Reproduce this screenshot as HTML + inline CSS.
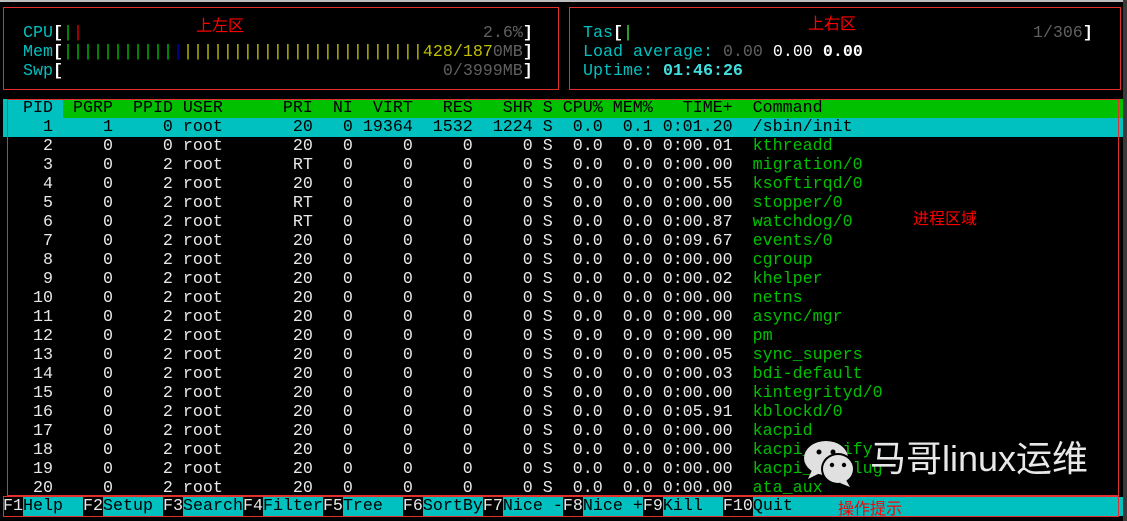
<!DOCTYPE html>
<html><head><meta charset="utf-8"><style>
html,body{margin:0;padding:0;background:#000;width:1127px;height:521px;overflow:hidden;position:relative}
pre{margin:0;font-family:"Liberation Mono",monospace;font-size:16.67px;line-height:19px;position:absolute;white-space:pre;color:#e8e8e8;overflow:hidden}
.c{color:#00c0c0}.g{color:#00c000}.r{color:#e00000}.b{color:#0000d0}.y{color:#c0c000}.d{color:#606060}.w{color:#fff;font-weight:bold}.bc{color:#40e0e0;font-weight:bold}
.box{position:absolute;border:1px solid #e03030;box-sizing:border-box}
.ann{position:absolute;color:#ff0000;font-family:"Noto Sans CJK SC",sans-serif;font-size:16px;line-height:16px}
.hd{background:#00c000;color:#000}.hp{background:#00c0c0;color:#000}
.sel{background:#00c0c0;color:#000}
.k{color:#e8e8e8;background:#000}.f{background:#00c0c0;color:#000}
</style></head><body>
<div style="position:absolute;left:0;top:0;width:1127px;height:2px;background:#bdbdbd"></div>
<div style="position:absolute;left:1123px;top:0;width:4px;height:521px;background:#3a3a3a"></div>
<div class="box" style="left:3px;top:7px;width:556px;height:83px"></div>
<div class="box" style="left:569px;top:7px;width:552px;height:83px"></div>
<pre style="left:3px;top:24px">  <span class="c">CPU</span><span class="w">[</span><span class="g">|</span><span class="r">|</span>                                        <span class="d">2.6%</span><span class="w">]</span>
  <span class="c">Mem</span><span class="w">[</span><span class="g">|||||||||||</span><span class="b">|</span><span class="y">||||||||||||||||||||||||428/187</span><span class="d">0MB</span><span class="w">]</span>
  <span class="c">Swp</span><span class="w">[</span>                                      <span class="d">0/3999MB</span><span class="w">]</span></pre>
<pre style="left:583px;top:24px"><span class="c">Tas</span><span class="w">[</span><span style="color:#40e040">|</span>                                        <span class="d">1/306</span><span class="w">]</span>
<span class="c">Load average: </span><span class="d">0.00</span> <span style="color:#fff">0.00</span> <span class="w">0.00</span>
<span class="c">Uptime: </span><span class="bc">01:46:26</span></pre>
<pre style="left:3px;top:99px;width:1120px;height:397px"><span class="hp">  PID </span><span class="hd"> PGRP  PPID USER      PRI  NI  VIRT   RES   SHR S CPU% MEM%   TIME+  Command                                       </span>
<span class="sel">    1     1     0 root       20   0 19364  1532  1224 S  0.0  0.1 0:01.20  /sbin/init                                    </span>
    2     0     0 root       20   0     0     0     0 S  0.0  0.0 0:00.01  <span class="g">kthreadd</span>
    3     0     2 root       RT   0     0     0     0 S  0.0  0.0 0:00.00  <span class="g">migration/0</span>
    4     0     2 root       20   0     0     0     0 S  0.0  0.0 0:00.55  <span class="g">ksoftirqd/0</span>
    5     0     2 root       RT   0     0     0     0 S  0.0  0.0 0:00.00  <span class="g">stopper/0</span>
    6     0     2 root       RT   0     0     0     0 S  0.0  0.0 0:00.87  <span class="g">watchdog/0</span>
    7     0     2 root       20   0     0     0     0 S  0.0  0.0 0:09.67  <span class="g">events/0</span>
    8     0     2 root       20   0     0     0     0 S  0.0  0.0 0:00.00  <span class="g">cgroup</span>
    9     0     2 root       20   0     0     0     0 S  0.0  0.0 0:00.02  <span class="g">khelper</span>
   10     0     2 root       20   0     0     0     0 S  0.0  0.0 0:00.00  <span class="g">netns</span>
   11     0     2 root       20   0     0     0     0 S  0.0  0.0 0:00.00  <span class="g">async/mgr</span>
   12     0     2 root       20   0     0     0     0 S  0.0  0.0 0:00.00  <span class="g">pm</span>
   13     0     2 root       20   0     0     0     0 S  0.0  0.0 0:00.05  <span class="g">sync_supers</span>
   14     0     2 root       20   0     0     0     0 S  0.0  0.0 0:00.03  <span class="g">bdi-default</span>
   15     0     2 root       20   0     0     0     0 S  0.0  0.0 0:00.00  <span class="g">kintegrityd/0</span>
   16     0     2 root       20   0     0     0     0 S  0.0  0.0 0:05.91  <span class="g">kblockd/0</span>
   17     0     2 root       20   0     0     0     0 S  0.0  0.0 0:00.00  <span class="g">kacpid</span>
   18     0     2 root       20   0     0     0     0 S  0.0  0.0 0:00.00  <span class="g">kacpi_notify</span>
   19     0     2 root       20   0     0     0     0 S  0.0  0.0 0:00.00  <span class="g">kacpi_hotplug</span>
   20     0     2 root       20   0     0     0     0 S  0.0  0.0 0:00.00  <span class="g">ata_aux</span></pre>
<pre style="left:3px;top:497px;width:1120px;height:19px;background:#00c0c0"><span class="k">F1</span><span class="f">Help  </span><span class="k">F2</span><span class="f">Setup </span><span class="k">F3</span><span class="f">Search</span><span class="k">F4</span><span class="f">Filter</span><span class="k">F5</span><span class="f">Tree  </span><span class="k">F6</span><span class="f">SortBy</span><span class="k">F7</span><span class="f">Nice -</span><span class="k">F8</span><span class="f">Nice +</span><span class="k">F9</span><span class="f">Kill  </span><span class="k">F10</span><span class="f">Quit</span></pre>
<div class="box" style="left:7px;top:99px;width:1112px;height:397px"></div>
<div class="box" style="left:3px;top:496px;width:1116px;height:21px"></div>
<div class="ann" style="left:196px;top:16px">上左区</div>
<div class="ann" style="left:808px;top:14px">上右区</div>
<div class="ann" style="left:913px;top:209px">进程区域</div>
<div class="ann" style="left:838px;top:499px">操作提示</div>
<svg style="position:absolute;left:800px;top:436px" width="75" height="60" viewBox="0 0 75 60">
<ellipse cx="26" cy="22" rx="22" ry="17" fill="#e0e0e0"/>
<path d="M12 34 L8 43 L20 37Z" fill="#e0e0e0"/>
<ellipse cx="38" cy="33" rx="17" ry="16" fill="#000"/>
<ellipse cx="38" cy="33" rx="15" ry="14" fill="#e0e0e0"/>
<path d="M46 44 L50 51 L40 47Z" fill="#e0e0e0"/>
<circle cx="19" cy="16" r="2.5" fill="#000"/><circle cx="33" cy="16" r="2.5" fill="#000"/>
<circle cx="32" cy="29" r="2.2" fill="#000"/><circle cx="44" cy="29" r="2.2" fill="#000"/>
</svg>
<div style="position:absolute;left:870px;top:437px;color:#e8e8e8;font-family:'Liberation Sans','Noto Sans CJK SC',sans-serif;font-size:36px;line-height:44px">马哥linux运维</div>
</body></html>
